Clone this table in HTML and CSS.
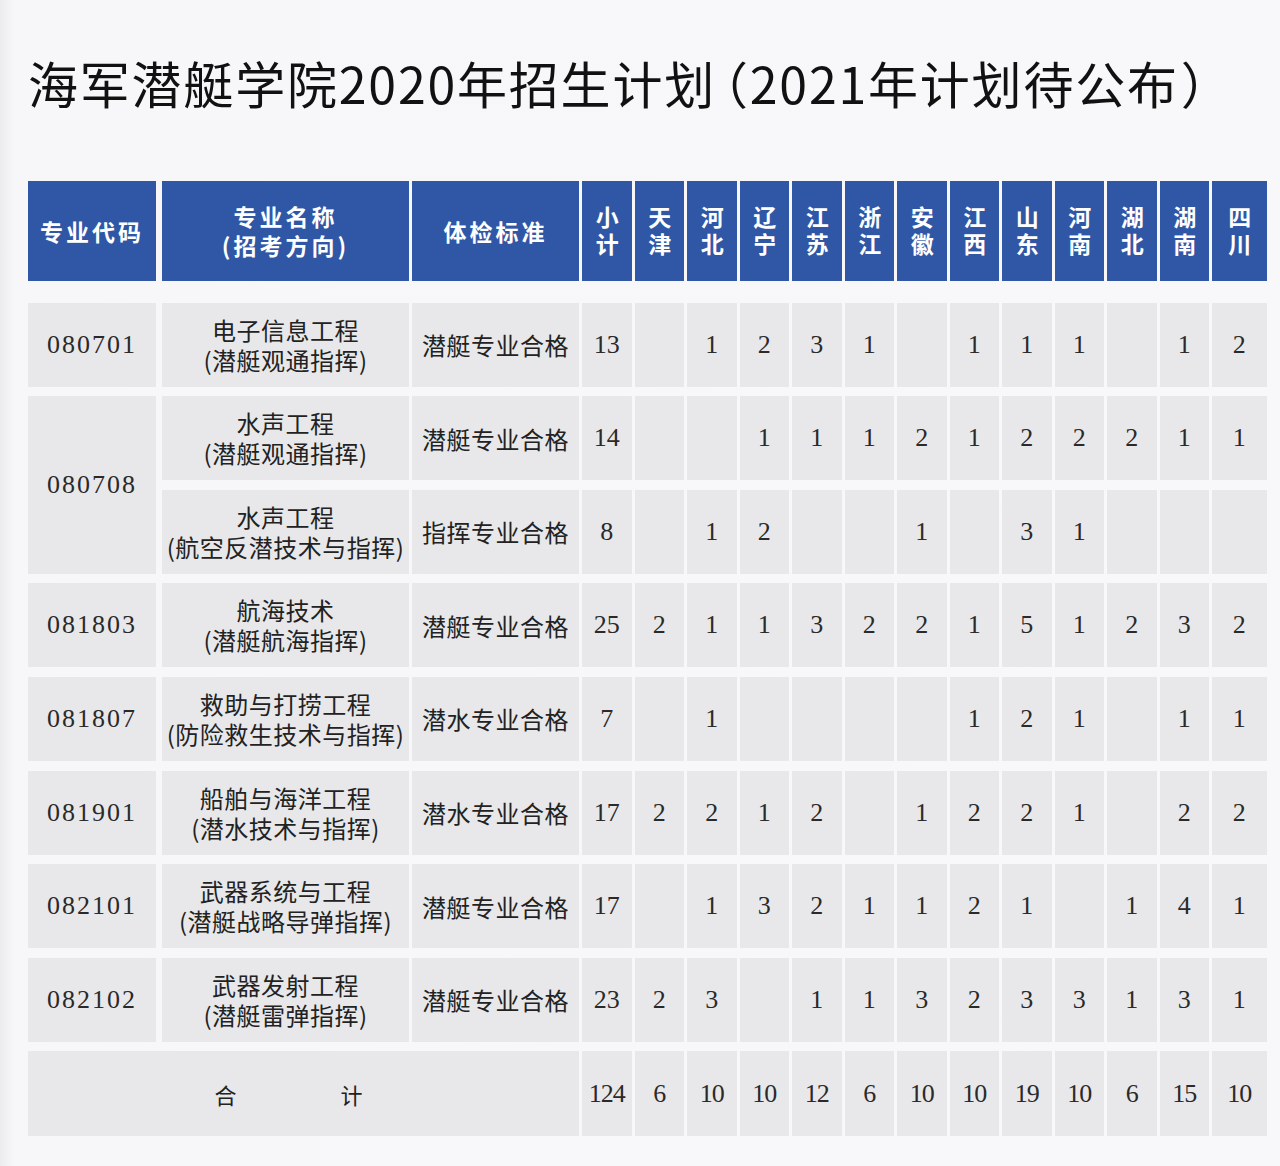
FILE: index.html
```html
<!DOCTYPE html>
<html lang="zh-CN">
<head>
<meta charset="utf-8">
<title>海军潜艇学院2020年招生计划</title>
<link rel="stylesheet" href="styles.css">
</head>
<body>
<div class="page">
  <h1 class="title">海军潜艇学院2020年招生计划<span class="po">（</span>2021年计划待公布<span class="pc">）</span></h1>
  <div class="plan">
    <div class="hd code">专业代码</div>
    <div class="hd name">专业名称<br>(招考方向)</div>
    <div class="hd std">体检标准</div>
    <div class="hd v"><span>小计</span></div>
    <div class="hd v"><span>天津</span></div>
    <div class="hd v"><span>河北</span></div>
    <div class="hd v"><span>辽宁</span></div>
    <div class="hd v"><span>江苏</span></div>
    <div class="hd v"><span>浙江</span></div>
    <div class="hd v"><span>安徽</span></div>
    <div class="hd v"><span>江西</span></div>
    <div class="hd v"><span>山东</span></div>
    <div class="hd v"><span>河南</span></div>
    <div class="hd v"><span>湖北</span></div>
    <div class="hd v"><span>湖南</span></div>
    <div class="hd v"><span>四川</span></div>

    <div class="c code">080701</div>
    <div class="c name">电子信息工程<br>(潜艇观通指挥)</div>
    <div class="c std">潜艇专业合格</div>
    <div class="c n">13</div><div class="c n"></div><div class="c n">1</div><div class="c n">2</div><div class="c n">3</div><div class="c n">1</div><div class="c n"></div><div class="c n">1</div><div class="c n">1</div><div class="c n">1</div><div class="c n"></div><div class="c n">1</div><div class="c n">2</div>

    <div class="c code span2">080708</div>
    <div class="c name">水声工程<br>(潜艇观通指挥)</div>
    <div class="c std">潜艇专业合格</div>
    <div class="c n">14</div><div class="c n"></div><div class="c n"></div><div class="c n">1</div><div class="c n">1</div><div class="c n">1</div><div class="c n">2</div><div class="c n">1</div><div class="c n">2</div><div class="c n">2</div><div class="c n">2</div><div class="c n">1</div><div class="c n">1</div>

    <div class="c name">水声工程<br>(航空反潜技术与指挥)</div>
    <div class="c std">指挥专业合格</div>
    <div class="c n">8</div><div class="c n"></div><div class="c n">1</div><div class="c n">2</div><div class="c n"></div><div class="c n"></div><div class="c n">1</div><div class="c n"></div><div class="c n">3</div><div class="c n">1</div><div class="c n"></div><div class="c n"></div><div class="c n"></div>

    <div class="c code">081803</div>
    <div class="c name">航海技术<br>(潜艇航海指挥)</div>
    <div class="c std">潜艇专业合格</div>
    <div class="c n">25</div><div class="c n">2</div><div class="c n">1</div><div class="c n">1</div><div class="c n">3</div><div class="c n">2</div><div class="c n">2</div><div class="c n">1</div><div class="c n">5</div><div class="c n">1</div><div class="c n">2</div><div class="c n">3</div><div class="c n">2</div>

    <div class="c code">081807</div>
    <div class="c name">救助与打捞工程<br>(防险救生技术与指挥)</div>
    <div class="c std">潜水专业合格</div>
    <div class="c n">7</div><div class="c n"></div><div class="c n">1</div><div class="c n"></div><div class="c n"></div><div class="c n"></div><div class="c n"></div><div class="c n">1</div><div class="c n">2</div><div class="c n">1</div><div class="c n"></div><div class="c n">1</div><div class="c n">1</div>

    <div class="c code">081901</div>
    <div class="c name">船舶与海洋工程<br>(潜水技术与指挥)</div>
    <div class="c std">潜水专业合格</div>
    <div class="c n">17</div><div class="c n">2</div><div class="c n">2</div><div class="c n">1</div><div class="c n">2</div><div class="c n"></div><div class="c n">1</div><div class="c n">2</div><div class="c n">2</div><div class="c n">1</div><div class="c n"></div><div class="c n">2</div><div class="c n">2</div>

    <div class="c code">082101</div>
    <div class="c name">武器系统与工程<br>(潜艇战略导弹指挥)</div>
    <div class="c std">潜艇专业合格</div>
    <div class="c n">17</div><div class="c n"></div><div class="c n">1</div><div class="c n">3</div><div class="c n">2</div><div class="c n">1</div><div class="c n">1</div><div class="c n">2</div><div class="c n">1</div><div class="c n"></div><div class="c n">1</div><div class="c n">4</div><div class="c n">1</div>

    <div class="c code">082102</div>
    <div class="c name">武器发射工程<br>(潜艇雷弹指挥)</div>
    <div class="c std">潜艇专业合格</div>
    <div class="c n">23</div><div class="c n">2</div><div class="c n">3</div><div class="c n"></div><div class="c n">1</div><div class="c n">1</div><div class="c n">3</div><div class="c n">2</div><div class="c n">3</div><div class="c n">3</div><div class="c n">1</div><div class="c n">3</div><div class="c n">1</div>

    <div class="c total-label"><span>合</span><span>计</span></div>
    <div class="c t">124</div><div class="c t">6</div><div class="c t">10</div><div class="c t">10</div><div class="c t">12</div><div class="c t">6</div><div class="c t">10</div><div class="c t">10</div><div class="c t">19</div><div class="c t">10</div><div class="c t">6</div><div class="c t">15</div><div class="c t">10</div>
  </div>
</div>
</body>
</html>
```

FILE: styles.css
```css
html, body {
  margin: 0;
  padding: 0;
  background: #f7f7f9;
}

.page {
  width: 1280px;
  height: 1166px;
  box-sizing: border-box;
  padding: 52px 0 0 28px;
  background: linear-gradient(to right, #ececee 0px, #f7f7f9 14px, #f8f8fa 100%);
  font-family: "Noto Sans CJK SC", "Noto Sans", sans-serif;
  color: #262626;
}

.title {
  margin: 0;
  font-size: 50px;
  line-height: 60px;
  font-weight: 400;
  letter-spacing: 1.8px;
  color: #111;
  white-space: nowrap;
}

.title .po,
.title .pc {
  font-feature-settings: "halt";
}

.title .po {
  margin-left: 7px;
}

.title .pc {
  margin-left: 2px;
}

.plan {
  margin-top: 69px;
  display: grid;
  grid-template-columns: 131px 247px 167px repeat(12, 49.5px) 54.5px;
  grid-template-rows: 112px repeat(8, 84px) 85px;
  column-gap: 3px;
  row-gap: 9.6px;
}

.hd {
  margin-bottom: 12px;
  background: #2f57a6;
  color: #fff;
  font-weight: 700;
  display: flex;
  align-items: center;
  justify-content: center;
  text-align: center;
  font-size: 23px;
  letter-spacing: 3px;
  line-height: 29px;
}

.hd.v {
  font-size: 23px;
  letter-spacing: 0;
  padding-top: 3px;
}

.hd.v span {
  writing-mode: vertical-rl;
  text-orientation: upright;
  letter-spacing: 4px;
  line-height: 1;
}

.code {
  margin-right: 3px;
}

.c {
  background: #e8e8ea;
  display: flex;
  align-items: center;
  justify-content: center;
  text-align: center;
}

.c.code {
  font-family: "Liberation Serif", "DejaVu Serif", serif;
  font-size: 26px;
  letter-spacing: 2px;
  color: #2a2a2a;
}

.span2 {
  grid-row: span 2;
}

.c.name {
  font-size: 24px;
  letter-spacing: 0.5px;
  line-height: 30px;
  color: #222;
}

.c.std {
  font-size: 24px;
  letter-spacing: 0.5px;
  color: #222;
}

.c.n,
.c.t {
  font-family: "Liberation Serif", "DejaVu Serif", serif;
  font-size: 26px;
  color: #2a2a2a;
}

.c.t {
  letter-spacing: -1px;
}

.total-label {
  grid-column: span 3;
  gap: 104px;
  padding-right: 30px;
  font-size: 22px;
  color: #222;
}
```
